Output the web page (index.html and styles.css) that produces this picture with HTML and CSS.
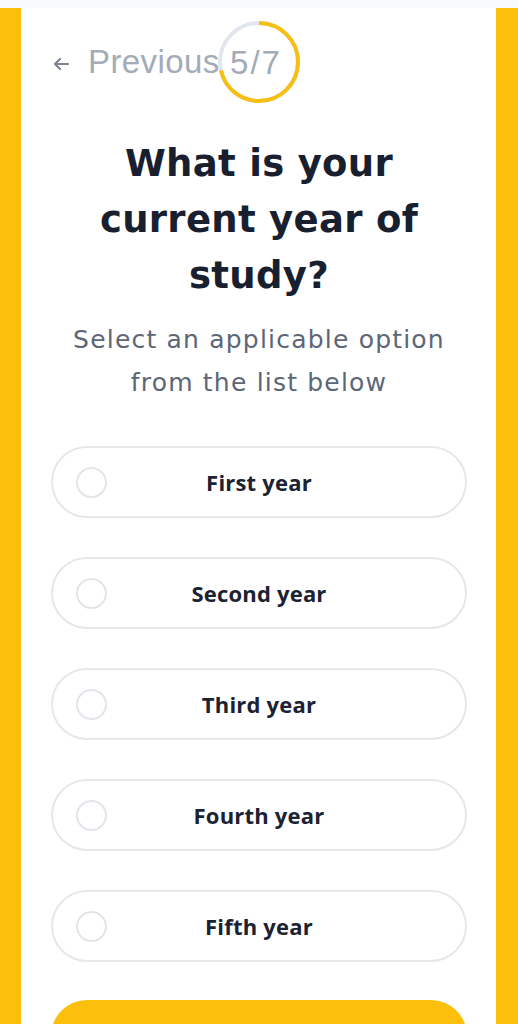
FILE: index.html
```html
<!DOCTYPE html>
<html lang="en">
<head>
<meta charset="utf-8">
<title>Year of study</title>
<link rel="stylesheet" href="styles.css">
</head>
<body>
<div class="topstrip"></div>
<div class="frame">
  <main class="panel">
    <header class="header">
      <a class="prev" href="#">
        <svg class="arrow" width="18" height="14" viewBox="0 0 18 14" aria-hidden="true"><path d="M16 7H3M8 2L3 7l5 5" fill="none" stroke="#7d8592" stroke-width="2.2" stroke-linecap="round" stroke-linejoin="round"/></svg>
        <span>Previous</span>
      </a>
      <div class="progress">
        <svg width="84" height="84" viewBox="0 0 84 84" aria-hidden="true">
          <circle cx="42" cy="42" r="39" fill="none" stroke="#e2e6ee" stroke-width="4"/>
          <circle cx="42" cy="42" r="39" fill="none" stroke="#f7bf16" stroke-width="4" stroke-dasharray="175.0 245.04" transform="rotate(-90 42 42)"/>
        </svg>
        <span class="count">5/7</span>
      </div>
    </header>

    <h1 class="title">What is your current year of study?</h1>
    <p class="subtitle">Select an applicable option from the list below</p>

    <ul class="options">
      <li class="option"><span class="radio"></span><span class="label">First year</span></li>
      <li class="option"><span class="radio"></span><span class="label">Second year</span></li>
      <li class="option"><span class="radio"></span><span class="label">Third year</span></li>
      <li class="option"><span class="radio"></span><span class="label">Fourth year</span></li>
      <li class="option"><span class="radio"></span><span class="label">Fifth year</span></li>
    </ul>

    <button class="next" type="button" aria-label="Next"></button>
  </main>
</div>
</body>
</html>
```
FILE: styles.css
```css
* { box-sizing: border-box; }
html, body { margin: 0; padding: 0; }
body {
  background: #fcbf0b;
  font-family: "Open Sans", "Noto Sans", sans-serif;
  height: 1024px;
  overflow: hidden;
}
.topstrip {
  height: 8px;
  background: #f8f9fb;
}
.frame {
  padding: 0 22px 0 21px;
}
.panel {
  background: #ffffff;
  min-height: 1016px;
  padding: 12px 29px 0 30px;
  display: flex;
  flex-direction: column;
}
.header {
  position: relative;
  height: 84px;
  display: flex;
  align-items: center;
}
.prev {
  display: flex;
  align-items: center;
  gap: 18px;
  margin-left: 1px;
  text-decoration: none;
  color: #a3abb7;
  font-family: "Liberation Sans", "Noto Sans", sans-serif;
  font-size: 33px;
  letter-spacing: 0.4px;
}
.arrow { margin-top: 4px; }
.progress {
  position: absolute;
  left: 50%;
  top: 0;
  width: 84px;
  height: 84px;
  margin-left: -42px;
  display: flex;
  align-items: center;
  justify-content: center;
}
.progress svg { position: absolute; left: 0; top: 0; }
.count {
  position: relative;
  color: #a3abb7;
  font-family: "Liberation Sans", "Noto Sans", sans-serif;
  font-size: 33px;
  letter-spacing: 2px;
  margin-left: -6px;
  margin-top: 2px;
}
.title {
  margin: 32px 10px 0;
  text-align: center;
  font-family: "DejaVu Sans", "Open Sans", sans-serif;
  font-size: 37px;
  line-height: 56px;
  font-weight: 700;
  color: #18202f;
  letter-spacing: 0.3px;
}
.subtitle {
  margin: 14px 0 0;
  text-align: center;
  font-family: "DejaVu Sans", "Open Sans", sans-serif;
  font-size: 25px;
  line-height: 43px;
  color: #5c6676;
  letter-spacing: 1.2px;
}
.options {
  list-style: none;
  margin: 42px 0 0;
  padding: 0;
  display: flex;
  flex-direction: column;
  gap: 39px;
}
.option {
  position: relative;
  height: 72px;
  border: 2px solid #e5e7eb;
  border-radius: 36px;
  display: flex;
  align-items: center;
  justify-content: center;
}
.radio {
  position: absolute;
  left: 23px;
  top: 50%;
  width: 31px;
  height: 31px;
  margin-top: -15.5px;
  border: 2px solid #e3e5ea;
  border-radius: 50%;
}
.label {
  font-size: 22px;
  font-weight: 700;
  color: #1b2232;
  letter-spacing: 0.2px;
}
.next {
  margin-top: 38px;
  height: 72px;
  border: none;
  border-radius: 36px;
  background: #fcbf0b;
}
```
